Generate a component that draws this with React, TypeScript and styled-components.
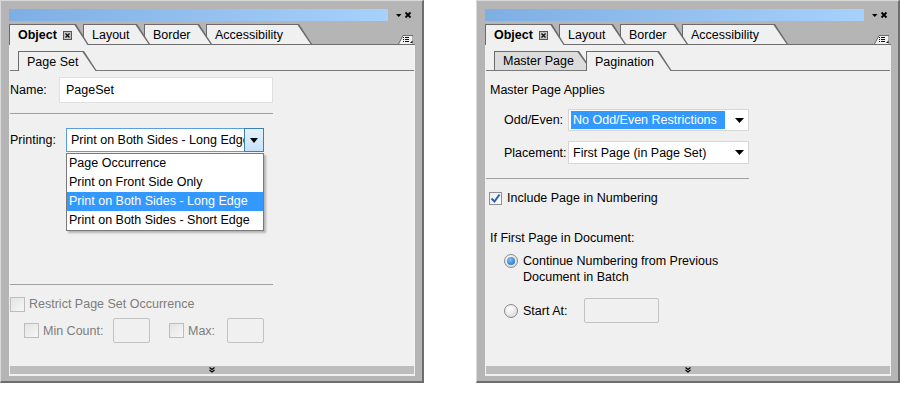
import React from "react";
import styled, { createGlobalStyle } from "styled-components";

const GlobalStyle = createGlobalStyle`
  body {
    margin: 0;
    background: #ffffff;
    font-family: "Liberation Sans", Arial, sans-serif;
    font-size: 12.5px;
    color: #000;
  }
  * { box-sizing: border-box; }
`;

const Screen = styled.div`
  display: flex;
  gap: 52px;
  width: 900px;
  height: 395px;
`;

const Frame = styled.div`
  width: 424px;
  height: 383px;
  display: flex;
  flex-direction: column;
  background: #b5b5b5;
  border-top: 1px solid #d9d9d9;
  border-left: 1px solid #d9d9d9;
  border-right: 2px solid #6d6d6d;
  border-bottom: 2px solid #6d6d6d;
  padding: 8px 7px 5px 8px;
`;

const TitleRow = styled.div`
  display: flex;
  height: 12px;
`;

const TitleBar = styled.div`
  flex: 1;
  background: linear-gradient(to right, #7eaee4, #a7d1fb);
`;

const TabStrip = styled.div`
  display: flex;
  align-items: flex-end;
  height: 24px;
  border-bottom: 1px solid #6e6e6e;
`;

const Tab = styled.div<{ $w: number; $z: number; $active?: boolean; $h: number }>`
  position: relative;
  z-index: ${(p) => p.$z};
  width: ${(p) => p.$w}px;
  height: ${(p) => (p.$active ? p.$h + 1 : p.$h)}px;
  margin-bottom: ${(p) => (p.$active ? -1 : 0)}px;
  margin-left: -6px;
  padding: 1px 0 0 1px;
  display: flex;
  background: #6b6b6b;
  clip-path: polygon(0 0, calc(100% - 13px) 0, 100% 100%, 0 100%);
  &:first-child {
    margin-left: 0;
  }
`;

const TabFace = styled.div<{ $bg: string; $bold?: boolean }>`
  flex: 1;
  display: flex;
  align-items: center;
  gap: 6px;
  padding-left: 8px;
  background: ${(p) => p.$bg};
  font-weight: ${(p) => (p.$bold ? "bold" : "normal")};
  white-space: nowrap;
  clip-path: polygon(0 0, calc(100% - 14.5px) 0, calc(100% - 1.5px) 100%, 0 100%);
`;

const MenuIcon = styled.svg`
  margin-left: auto;
  margin-right: 2px;
  display: block;
  flex: none;
`;

const Body = styled.div`
  position: relative;
  height: 331px;
  display: flex;
  flex-direction: column;
  background: #f0f0f0;
`;

const SubTabRow = styled.div`
  display: flex;
  align-items: flex-end;
  height: 26px;
  margin: 0 1px;
  padding-left: 8px;
  border-bottom: 1px solid #7a7a7a;
`;

const Form = styled.div<{ $pad: number }>`
  display: flex;
  flex-direction: column;
  padding-left: ${(p) => p.$pad}px;
`;

const Row = styled.div<{ $top: number; $h: number; $indent?: number; $top2?: boolean }>`
  display: flex;
  align-items: ${(p) => (p.$top2 ? "flex-start" : "center")};
  position: relative;
  margin-top: ${(p) => p.$top}px;
  height: ${(p) => p.$h}px;
  padding-left: ${(p) => p.$indent || 0}px;
`;

const Label = styled.span<{ $w?: number; $ml?: number; $disabled?: boolean }>`
  display: inline-block;
  flex: none;
  width: ${(p) => (p.$w ? `${p.$w}px` : "auto")};
  margin-left: ${(p) => p.$ml || 0}px;
  color: ${(p) => (p.$disabled ? "#7d7d7d" : "#000")};
  white-space: nowrap;
`;

const TextInput = styled.div<{ $w: number; $h: number; $disabled?: boolean }>`
  width: ${(p) => p.$w}px;
  height: ${(p) => p.$h}px;
  flex: none;
  display: flex;
  align-items: center;
  padding-left: 6px;
  background: ${(p) => (p.$disabled ? "#f0f0f0" : "#ffffff")};
  border: 1px solid ${(p) => (p.$disabled ? "#c2c2c2" : "#e0e0e0")};
  border-radius: ${(p) => (p.$disabled ? 2 : 0)}px;
`;

const Separator = styled.div<{ $top: number; $w: number; $ml?: number }>`
  margin-top: ${(p) => p.$top}px;
  margin-left: ${(p) => p.$ml || 0}px;
  width: ${(p) => p.$w}px;
  height: 1px;
  background: #a0a0a0;
`;

const FocusSelect = styled.div`
  width: 198px;
  height: 24px;
  display: flex;
  background: #fff;
  border: 1px solid #5a9ee0;
`;

const SelectText = styled.div`
  flex: 1;
  overflow: hidden;
  white-space: nowrap;
  padding-left: 4px;
  line-height: 22px;
`;

const DropButton = styled.div`
  width: 20px;
  flex: none;
  display: flex;
  align-items: center;
  justify-content: center;
  background: linear-gradient(#e6f2fc, #c6e2f8);
  border: 1px solid #3c7fb1;
  margin: -1px -1px -1px 0;
`;

const DropList = styled.div`
  position: absolute;
  top: 25px;
  left: 56px;
  width: 198px;
  z-index: 5;
  background: #fff;
  border: 1px solid #7a7a7a;
  box-shadow: 2px 2px 2px rgba(0, 0, 0, 0.25);
`;

const DropItem = styled.div<{ $selected?: boolean }>`
  height: 19px;
  line-height: 19px;
  padding-left: 2px;
  white-space: nowrap;
  background: ${(p) => (p.$selected ? "#3399ff" : "transparent")};
  color: ${(p) => (p.$selected ? "#fff" : "#000")};
`;

const Box = styled.div<{ $size: number; $disabled?: boolean; $ml?: number }>`
  width: ${(p) => p.$size}px;
  height: ${(p) => p.$size}px;
  margin-left: ${(p) => p.$ml || 0}px;
  flex: none;
  display: flex;
  align-items: center;
  justify-content: center;
  border: 1px solid ${(p) => (p.$disabled ? "#bdbdbd" : "#8e8f8f")};
  background: ${(p) =>
    p.$disabled ? "linear-gradient(135deg, #e4e4e4, #f6f6f6)" : "linear-gradient(135deg, #eeeeee, #ffffff)"};
`;

const Radio = styled.div<{ $on?: boolean }>`
  width: 14px;
  height: 14px;
  flex: none;
  margin-top: ${(p) => (p.$on ? 1 : 0)}px;
  border-radius: 50%;
  border: 1px solid #8a8a8a;
  display: flex;
  align-items: center;
  justify-content: center;
  background: radial-gradient(circle at 40% 35%, #ffffff, #d2d2d2);
  &::after {
    content: "";
    display: ${(p) => (p.$on ? "block" : "none")};
    width: 8px;
    height: 8px;
    border-radius: 50%;
    background: radial-gradient(circle at 40% 35%, #7fc4ff, #1461b5);
  }
`;

const Heading = styled.div<{ $top: number }>`
  margin-top: ${(p) => p.$top}px;
  line-height: 14px;
`;

const FieldGrid = styled.div`
  display: grid;
  grid-template-columns: 64px 181px;
  row-gap: 10px;
  align-items: center;
  margin-top: 12px;
  padding-left: 14px;
`;

const PlainSelect = styled.div<{ $h: number }>`
  height: ${(p) => p.$h}px;
  display: flex;
  align-items: center;
  padding: 0 4px 0 2px;
  background: #fff;
  border: 1px solid #d6d6d6;
`;

const SelectValue = styled.span<{ $hl?: boolean }>`
  flex: ${(p) => (p.$hl ? "none" : "1")};
  width: ${(p) => (p.$hl ? "154px" : "auto")};
  margin-right: ${(p) => (p.$hl ? "auto" : "0")};
  display: flex;
  align-items: center;
  height: 18px;
  padding-left: 2px;
  white-space: nowrap;
  background: ${(p) => (p.$hl ? "#3399ff" : "transparent")};
  color: ${(p) => (p.$hl ? "#fff" : "#000")};
`;

const ArrowIcon = styled.svg`
  flex: none;
  display: block;
`;

const RadioText = styled.div`
  margin-left: 5px;
  line-height: 16px;
`;

const BottomStrip = styled.div`
  margin: auto 1px 2px 1px;
  height: 8px;
  background: #bdbdbd;
  display: flex;
  align-items: center;
  justify-content: center;
`;

function Arrow({ w = 9 }: { w?: number }) {
  return (
    <ArrowIcon width={w} height="5" viewBox={`0 0 ${w} 5`}>
      <path d={`M0 0h${w}l-${w / 2} 5z`} fill="#000" />
    </ArrowIcon>
  );
}

function CloseBox() {
  return (
    <svg width="9" height="9" viewBox="0 0 9 9">
      <rect x="0.5" y="0.5" width="8" height="8" fill="#c4c4c4" stroke="#555" />
      <path d="M2.5 2.5l4 4M6.5 2.5l-4 4" stroke="#111" strokeWidth="1.3" />
    </svg>
  );
}

function Check() {
  return (
    <svg width="11" height="11" viewBox="0 0 11 11">
      <path d="M1.5 5.5l3 3 5-7" fill="none" stroke="#2b5fb3" strokeWidth="2" />
    </svg>
  );
}

function PanelChrome({ children }: { children: React.ReactNode }) {
  const tabs = [
    { label: "Object", w: 80 },
    { label: "Layout", w: 67 },
    { label: "Border", w: 68 },
    { label: "Accessibility", w: 106 },
  ];
  return (
    <Frame>
      <TitleRow>
        <TitleBar />
        <svg width="27" height="12" viewBox="0 0 27 12">
          <path d="M8 5h5.5l-2.75 3z" fill="#000" />
          <path d="M17.5 3.5l5 5M22.5 3.5l-5 5" stroke="#000" strokeWidth="1.8" />
        </svg>
      </TitleRow>
      <TabStrip>
        {tabs.map((t, i) => (
          <Tab key={t.label} $w={t.w} $h={20} $z={10 - i} $active={i === 0}>
            <TabFace $bg="#f0f0f0" $bold={i === 0}>
              {t.label}
              {i === 0 && <CloseBox />}
            </TabFace>
          </Tab>
        ))}
        <MenuIcon width="15" height="9" viewBox="0 0 15 9">
          <path d="M0.5 9L5 0.5H15V9" fill="#f0f0f0" stroke="#6b6b6b" />
          <path d="M5 2.5h1M5 4.5h1M5 6.5h1M7 2.5h4M7 4.5h4M7 6.5h4" stroke="#111" />
          <path d="M12 8h2.5V5.5z" fill="#111" />
        </MenuIcon>
      </TabStrip>
      <Body>
        {children}
        <BottomStrip>
          <svg width="6" height="6" viewBox="0 0 6 6">
            <path d="M0.5 0.5l2.5 2 2.5-2M0.5 3l2.5 2 2.5-2" fill="none" stroke="#000" strokeWidth="1.2" />
          </svg>
        </BottomStrip>
      </Body>
    </Frame>
  );
}

function PageSetPanel() {
  return (
    <PanelChrome>
      <SubTabRow>
        <Tab $w={79} $h={19} $z={3} $active>
          <TabFace $bg="#f0f0f0">Page Set</TabFace>
        </Tab>
      </SubTabRow>
      <Form $pad={1}>
        <Row $top={6} $h={26}>
          <Label $w={49}>Name:</Label>
          <TextInput $w={214} $h={26}>PageSet</TextInput>
        </Row>
        <Separator $top={10} $w={263} />
        <Row $top={14} $h={24}>
          <Label $w={56}>Printing:</Label>
          <FocusSelect>
            <SelectText>Print on Both Sides - Long Edge</SelectText>
            <DropButton>
              <Arrow w={8} />
            </DropButton>
          </FocusSelect>
          <DropList>
            <DropItem>Page Occurrence</DropItem>
            <DropItem>Print on Front Side Only</DropItem>
            <DropItem $selected>Print on Both Sides - Long Edge</DropItem>
            <DropItem>Print on Both Sides - Short Edge</DropItem>
          </DropList>
        </Row>
        <Separator $top={132} $w={263} />
        <Row $top={11} $h={16}>
          <Box $size={15} $disabled />
          <Label $ml={4} $disabled>
            Restrict Page Set Occurrence
          </Label>
        </Row>
        <Row $top={6} $h={25} $indent={14}>
          <Box $size={15} $disabled />
          <Label $ml={4} $w={70} $disabled>
            Min Count:
          </Label>
          <TextInput $w={37} $h={25} $disabled />
          <Box $size={15} $disabled $ml={19} />
          <Label $ml={4} $w={39} $disabled>
            Max:
          </Label>
          <TextInput $w={37} $h={25} $disabled />
        </Row>
      </Form>
    </PanelChrome>
  );
}

function PaginationPanel() {
  return (
    <PanelChrome>
      <SubTabRow>
        <Tab $w={98} $h={19} $z={2}>
          <TabFace $bg="#dcdcdc">Master Page</TabFace>
        </Tab>
        <Tab $w={86} $h={19} $z={3} $active>
          <TabFace $bg="#f0f0f0">Pagination</TabFace>
        </Tab>
      </SubTabRow>
      <Form $pad={5}>
        <Heading $top={12}>Master Page Applies</Heading>
        <FieldGrid>
          <Label>Odd/Even:</Label>
          <PlainSelect $h={22}>
            <SelectValue $hl>No Odd/Even Restrictions</SelectValue>
            <Arrow />
          </PlainSelect>
          <Label>Placement:</Label>
          <PlainSelect $h={23}>
            <SelectValue>First Page (in Page Set)</SelectValue>
            <Arrow />
          </PlainSelect>
        </FieldGrid>
        <Separator $top={14} $w={263} $ml={-4} />
        <Row $top={12} $h={14}>
          <Box $size={13} $ml={-1}>
            <Check />
          </Box>
          <Label $ml={5}>Include Page in Numbering</Label>
        </Row>
        <Heading $top={26}>If First Page in Document:</Heading>
        <Row $top={8} $h={32} $indent={14} $top2>
          <Radio $on />
          <RadioText>
            Continue Numbering from Previous
            <br />
            Document in Batch
          </RadioText>
        </Row>
        <Row $top={13} $h={25} $indent={14}>
          <Radio />
          <Label $ml={5} $w={61}>
            Start At:
          </Label>
          <TextInput $w={75} $h={25} $disabled />
        </Row>
      </Form>
    </PanelChrome>
  );
}

export default function App() {
  return (
    <>
      <GlobalStyle />
      <Screen>
        <PageSetPanel />
        <PaginationPanel />
      </Screen>
    </>
  );
}
